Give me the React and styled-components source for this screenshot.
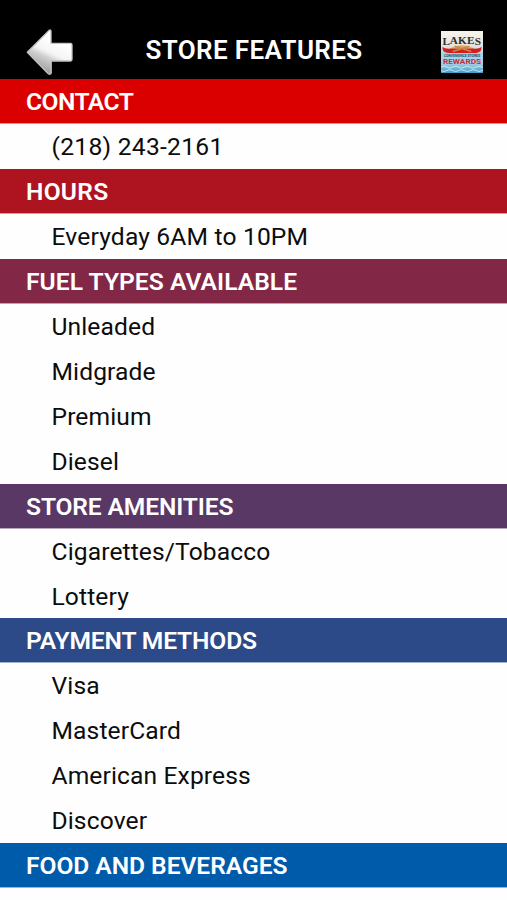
import React from "react";
import styled, { createGlobalStyle } from "styled-components";

const GlobalStyle = createGlobalStyle`
  body { margin: 0; background: #fff; overflow: hidden; }
`;

const Screen = styled.main`
  width: 507px;
  height: 900px;
  overflow: hidden;
  background: #fefefe;
  font-family: Roboto, sans-serif;
`;

const TopBar = styled.header`
  display: grid;
  grid-template-columns: 80px 1fr 80px;
  align-items: center;
  box-sizing: border-box;
  height: 79.2px;
  padding-top: 22px;
  background: #000;
`;

const BackButton = styled.button`
  display: block;
  width: 50px;
  height: 48px;
  margin: 3px 0 0 25px;
  padding: 0;
  border: 0;
  background: none;
`;

const Title = styled.h1`
  margin: 0 0 2px 1px;
  color: #fff;
  font-size: 26px;
  font-weight: 600;
  line-height: 30px;
  letter-spacing: 0.35px;
  text-align: center;
  white-space: nowrap;
`;

const Logo = styled.svg`
  display: block;
  width: 42px;
  height: 42px;
  margin: 3px 0 0 14px;
`;

const SectionBar = styled.h2`
  box-sizing: border-box;
  height: 44.95px;
  margin: 0;
  padding-left: 26px;
  border-bottom: 1px solid #ffffff90;
  background: ${(p) => p.$color};
  color: #fff;
  font-size: 24.6px;
  font-weight: 600;
  line-height: 45px;
  letter-spacing: ${(p) => p.$spacing || 0}px;
  white-space: nowrap;
`;

const Item = styled.p`
  height: 44.95px;
  margin: 0;
  padding-left: 51.5px;
  color: #0c0c0c;
  font-size: 24.6px;
  line-height: 45px;
  letter-spacing: ${(p) => p.$spacing || 0.12}px;
  white-space: nowrap;
`;

const sections = [
  { title: "CONTACT", spacing: -0.55, color: "#da0000", items: [["(218) 243-2161", 0.28]] },
  { title: "HOURS", spacing: 0.25, color: "#ae1320", items: [["Everyday 6AM to 10PM", 0.17]] },
  { title: "FUEL TYPES AVAILABLE", spacing: 0.04, color: "#822745", items: [["Unleaded"], ["Midgrade"], ["Premium"], ["Diesel"]] },
  { title: "STORE AMENITIES", spacing: -0.13, color: "#5a3865", items: [["Cigarettes/Tobacco"], ["Lottery"]] },
  { title: "PAYMENT METHODS", spacing: -0.15, color: "#2c4988", items: [["Visa"], ["MasterCard"], ["American Express"], ["Discover"]] },
  { title: "FOOD AND BEVERAGES", spacing: -0.05, color: "#005baa", items: [] },
];

const BackArrow = () => (
  <svg width="50" height="48" viewBox="25 28 50 48">
    <defs>
      <linearGradient id="arrowFill" x1="0.65" y1="0.25" x2="0.35" y2="0.9">
        <stop offset="0" stopColor="#fff" />
        <stop offset="0.42" stopColor="#f4f4f4" />
        <stop offset="0.6" stopColor="#cfcfcf" />
        <stop offset="1" stopColor="#a2a2a2" />
      </linearGradient>
    </defs>
    <path
      d="M27.3 52.3 L49 30.4 Q51 29.2 51 31.5 V43.3 H70.5 Q72 43.3 72 44.8 V59.6 Q72 61 70.5 61 H51.2 V73 Q50.5 75 48.3 73.8 Z"
      fill="url(#arrowFill)"
      stroke="#c4c4c4"
      strokeWidth="1.3"
      strokeLinejoin="round"
    />
  </svg>
);

const LakesLogo = () => (
  <Logo viewBox="0 0 43 43">
    <defs>
      <linearGradient id="sky" x1="0" y1="0" x2="0" y2="1">
        <stop offset="0" stopColor="#f7f4ee" />
        <stop offset="0.35" stopColor="#e8e2dc" />
        <stop offset="0.55" stopColor="#a9d2e6" />
        <stop offset="0.78" stopColor="#a3cfe4" />
        <stop offset="1" stopColor="#3f9bcb" />
      </linearGradient>
    </defs>
    <rect width="43" height="43" fill="url(#sky)" />
    <path d="M9 18 Q21 11 34 18 Z" fill="#e0a868" />
    <path d="M1.5 16.5 Q4 18.5 10 18 H33 Q39 18.5 41.5 16.5 Q42 22 36 22.5 H7 Q1 22 1.5 16.5Z" fill="#d21f1c" />
    <path d="M12 21 L29 15.5 M14 15.5 L31 21" stroke="#c88a3c" strokeWidth="1.6" />
    <g fill="#2b2f33" fontFamily="Liberation Serif, serif" fontWeight="700" fontSize="11.5">
      <text x="1.5" y="14.5">L</text>
      <text x="9" y="13.5">A</text>
      <text x="17.3" y="13">K</text>
      <text x="26.5" y="13.5">E</text>
      <text x="34.5" y="14.5">S</text>
    </g>
    <text x="3" y="26.6" textLength="37" lengthAdjust="spacingAndGlyphs" fill="#1d4b70" fontFamily="Roboto, sans-serif" fontWeight="700" fontSize="4.2">CONVENIENCE STORES</text>
    <text x="2" y="34" textLength="39" lengthAdjust="spacingAndGlyphs" fill="#c22f40" fontFamily="Roboto, sans-serif" fontWeight="700" fontSize="7">REWARDS</text>
    <path d="M0 37 q3 -2 6 0 t6 0 t6 0 t6 0 t6 0 t6 0 t6 0 t6 0 M0 40.5 q3 2 6 0 t6 0 t6 0 t6 0 t6 0 t6 0 t6 0 t6 0" fill="none" stroke="#c7e7f3" strokeWidth="1" />
  </Logo>
);

export default function App() {
  return (
    <>
      <GlobalStyle />
      <Screen>
        <TopBar>
          <BackButton aria-label="Back"><BackArrow /></BackButton>
          <Title>STORE FEATURES</Title>
          <LakesLogo />
        </TopBar>
        {sections.map((s) => (
          <section key={s.title}>
            <SectionBar $color={s.color} $spacing={s.spacing}>{s.title}</SectionBar>
            {s.items.map(([label, spacing]) => (
              <Item key={label} $spacing={spacing}>{label}</Item>
            ))}
          </section>
        ))}
      </Screen>
    </>
  );
}
